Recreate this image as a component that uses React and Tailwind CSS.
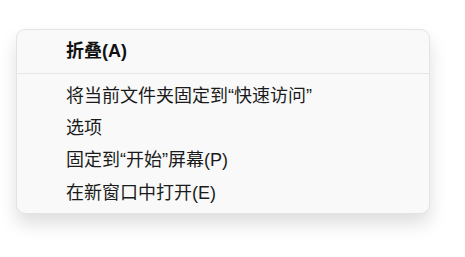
import React from 'react';

const items = [
  '将当前文件夹固定到“快速访问”',
  '选项',
  '固定到“开始”屏幕(P)',
  '在新窗口中打开(E)',
];

export default function App() {
  return (
    <div
      className="w-[465px] h-[257px] bg-white pt-[29px] pl-[16px]"
      style={{ fontFamily: '"Liberation Sans", "Noto Sans CJK SC", sans-serif' }}
    >
      <div className="w-[414px] h-[185px] bg-[#f9f9f9] border border-[#e3e3e3] rounded-[9px] shadow-[0_10px_18px_rgba(0,0,0,0.13)] flex flex-col">
        <div className="h-[43px] flex items-center pl-[49px] text-[18px] font-bold text-[#111]">
          折叠(A)
        </div>
        <div className="h-px bg-[#e6e6e6]" />
        <div className="pt-[6px] flex flex-col">
          {items.map((text) => (
            <div
              key={text}
              className="h-[32.4px] flex items-center pl-[49px] text-[18px] text-[#1b1b1b]"
            >
              {text}
            </div>
          ))}
        </div>
      </div>
    </div>
  );
}
